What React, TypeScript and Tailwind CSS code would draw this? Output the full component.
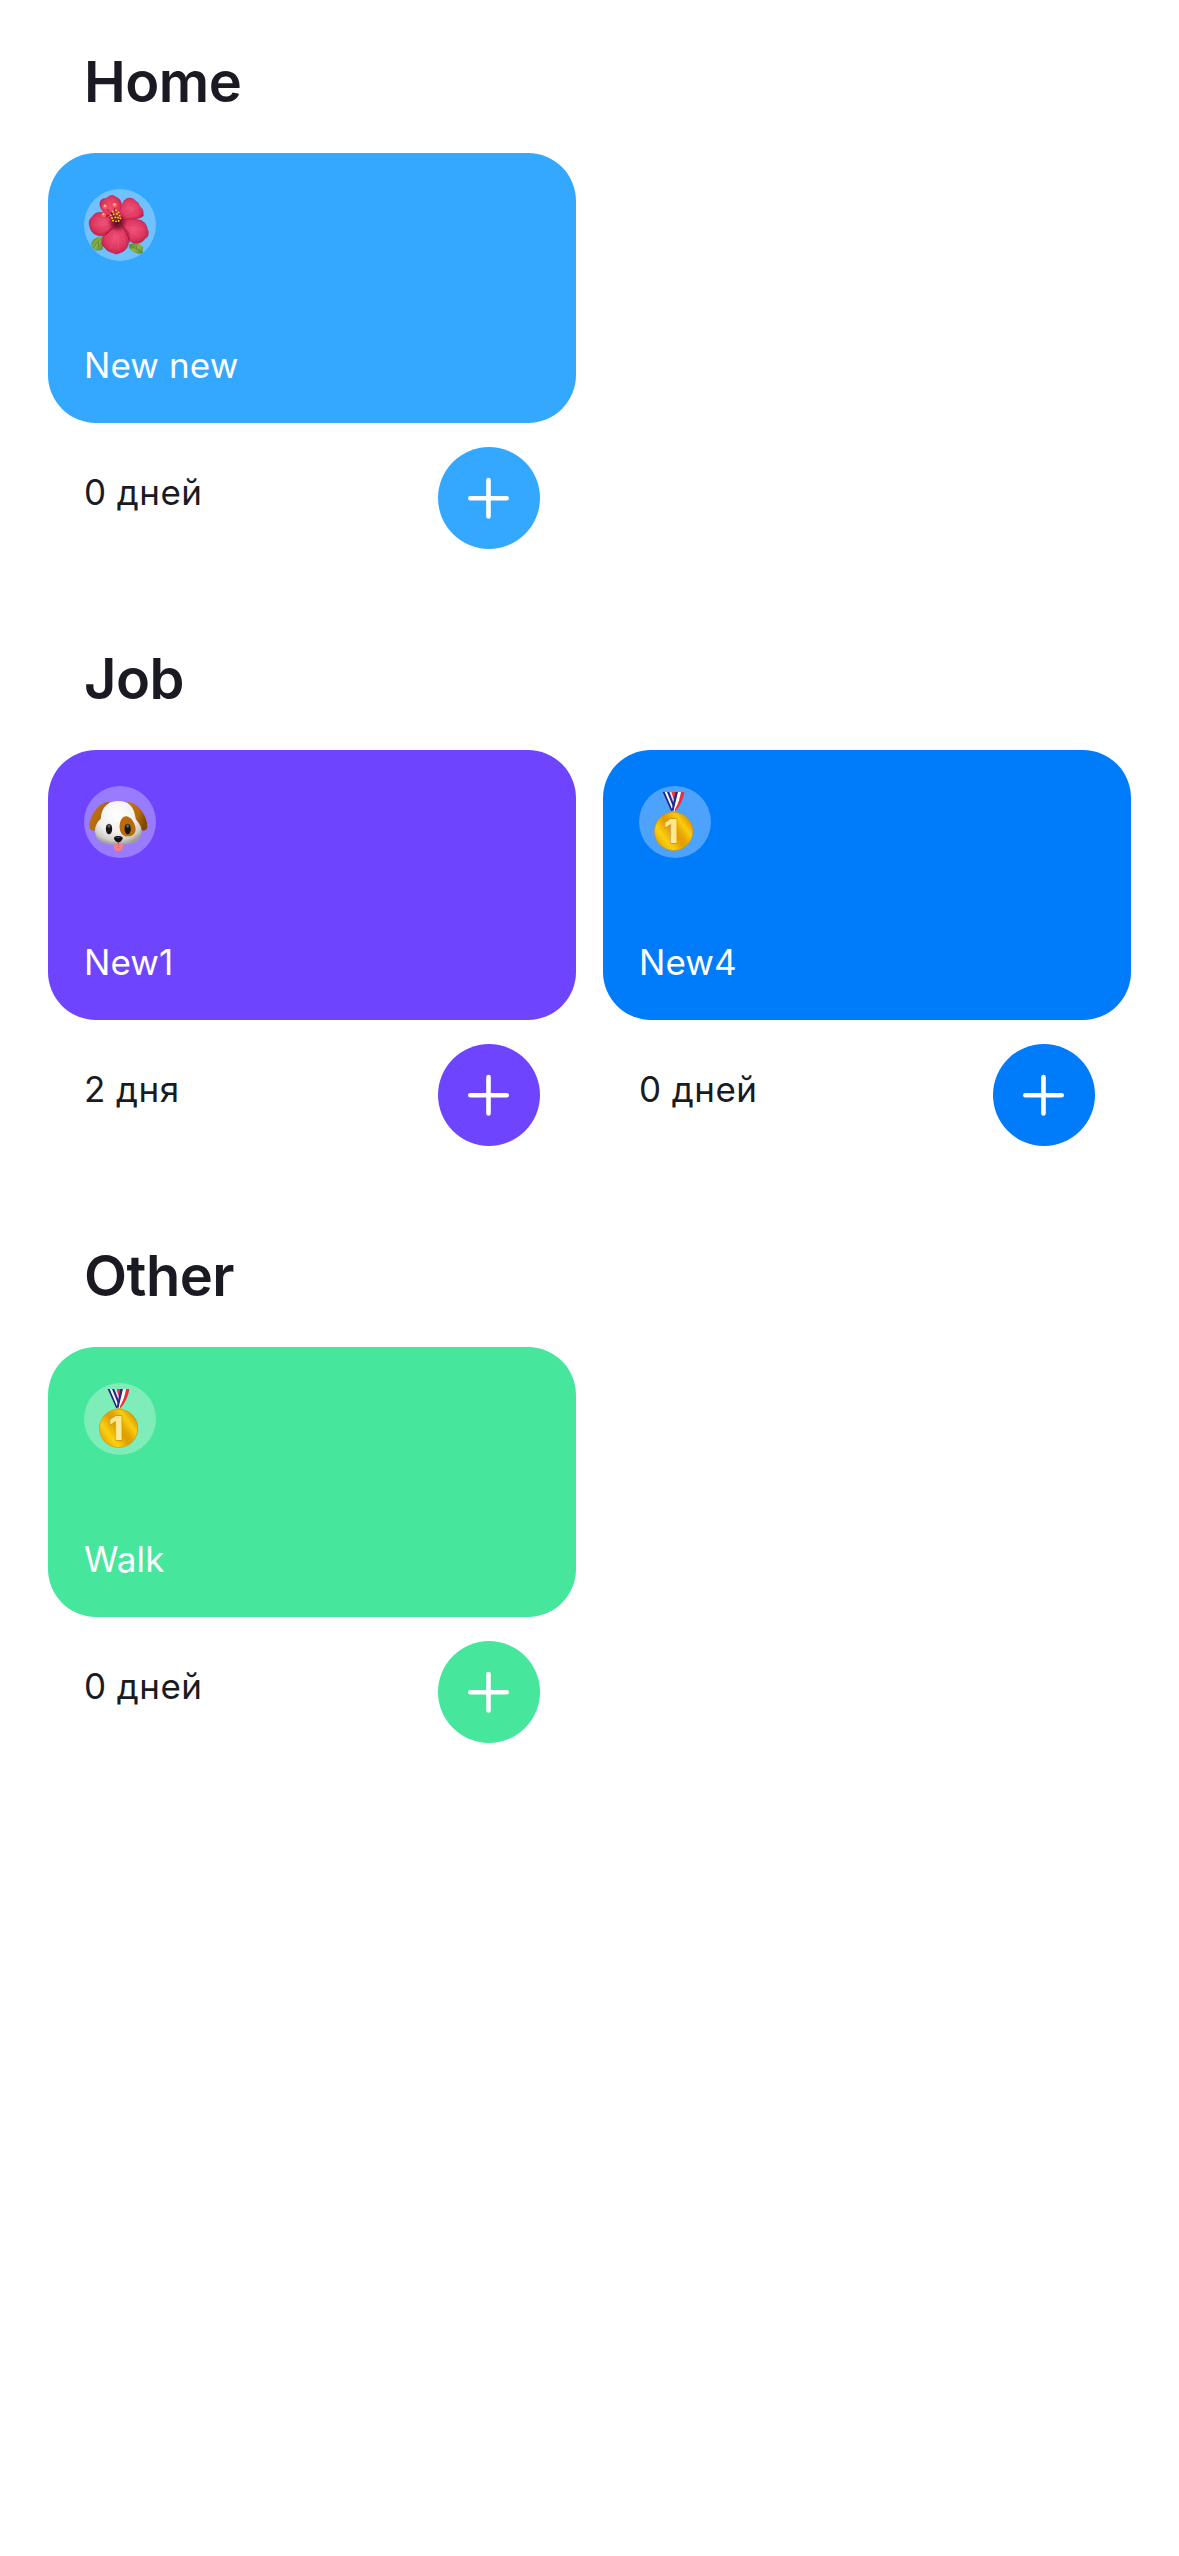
import type { ReactNode } from "react";

function Badge({ children }: { children: ReactNode }) {
  return (
    <div className="size-[72px] overflow-hidden rounded-full bg-white/30">
      <svg viewBox="12 12 216 216" className="block size-full">
        {children}
      </svg>
    </div>
  );
}

function Hibiscus() {
  return (
    <Badge>
      <defs>
        <radialGradient id="petal" cx="0.5" cy="0.45" r="0.6">
          <stop offset="0" stopColor="#ee5277" />
          <stop offset="0.6" stopColor="#e03760" />
          <stop offset="1" stopColor="#b81f47" />
        </radialGradient>
        <radialGradient id="throat">
          <stop offset="0" stopColor="#4d0716" />
          <stop offset="0.5" stopColor="#7d0f2b" stopOpacity="0.75" />
          <stop offset="1" stopColor="#a81b3f" stopOpacity="0" />
        </radialGradient>
        <linearGradient id="leaf" x1="0" y1="0" x2="1" y2="1">
          <stop offset="0" stopColor="#4f812f" />
          <stop offset="0.5" stopColor="#8db34c" />
          <stop offset="1" stopColor="#578732" />
        </linearGradient>
      </defs>
      <path d="M70 154C50 154 35 163 33 178L35 190C46 199 60 198 68 193Z" fill="url(#leaf)" />
      <path d="M148 178C168 172 184 175 189 187L188 206C174 208 156 202 147 188Z" fill="url(#leaf)" />
      <path d="M67 158Q48 173 38 190M55 170L56 186M152 183Q170 190 184 202M168 181L171 194" fill="none" stroke="#4b792d" strokeWidth="2" />
      <g fill="url(#petal)" stroke="#a81c42" strokeWidth="1.2">
        <path d="M113 110C89 94 65 84 60 62C57 42 72 40 80 40C87 30 101 28 109 37C124 43 127 57 123 77Z" />
        <path d="M111 109C115 88 121 67 130 51C140 34 158 38 166 47C179 54 176 63 187 72C192 82 188 89 191 92C180 103 145 105 111 109Z" />
        <path d="M111 114C94 92 72 76 49 84C38 89 40 95 31 101C24 111 29 120 30 129C37 149 55 156 75 151C90 147 100 133 111 114Z" />
        <path d="M116 111C137 99 161 99 178 105C190 106 201 120 202 132C208 143 205 157 196 160C188 174 174 177 160 174C136 165 137 132 116 111Z" />
        <path d="M116 119C89 125 68 143 66 166C62 175 69 186 76 190C81 200 94 201 101 205C111 210 119 203 127 201C139 194 147 183 146 166C151 151 146 136 132 129Z" />
      </g>
      <path d="M67 88Q92 98 111 114L74 152M117 109Q145 145 149 173M75 148Q93 132 118 123" fill="none" stroke="#861331" strokeWidth="3" opacity="0.7" />
      <circle cx="112" cy="112" r="30" fill="url(#throat)" />
      <g fill="none" stroke="#ffb3bd" strokeWidth="1" opacity="0.3">
        <path d="M130 92L166 70M128 84L150 52M136 98L180 86M88 118L40 120M80 106L46 98M87 130L54 144M106 148L92 193M116 148L115 196M127 145L136 185M145 125L190 132M148 134L182 161M104 74L98 42M86 78L70 62" />
      </g>
      <path d="M76 68L98 91M104 63L104 82M73 91L92 91" stroke="#a91439" strokeWidth="3" />
      <path d="M94 82L110 112" stroke="#701326" strokeWidth="5" />
      <g fill="#ff5b60" stroke="#c9223d" strokeWidth="1">
        <circle cx="76" cy="65" r="9" />
        <circle cx="104" cy="60" r="9" />
        <circle cx="71" cy="90" r="8" />
      </g>
      <g fill="#ffc0b0">
        <circle cx="75" cy="63" r="3.5" />
        <circle cx="103" cy="58" r="3.5" />
        <circle cx="70" cy="88" r="3" />
      </g>
      <path d="M92 91H119M96 99L120 95M98 80L114 108M108 76L104 108M101 87L121 102M99 107L115 86M116 108L107 93" stroke="#8c4710" strokeWidth="2" />
      <g fill="#ffd42a">
        {[[98, 80], [108, 76], [116, 82], [92, 91], [101, 88], [111, 87], [119, 92], [96, 99], [106, 97], [114, 98], [121, 100], [99, 107], [108, 109], [116, 108]].map(([x, y]) => (
          <circle key={`${x}-${y}`} cx={x} cy={y} r="2.8" />
        ))}
      </g>
    </Badge>
  );
}

function Dog() {
  return (
    <Badge>
      <defs>
        <radialGradient id="fur" cx="0.46" cy="0.3" r="0.7">
          <stop offset="0" stopColor="#fff" />
          <stop offset="0.6" stopColor="#f1f0ef" />
          <stop offset="0.86" stopColor="#cfcccb" />
          <stop offset="1" stopColor="#a29b9c" />
        </radialGradient>
        <linearGradient id="ear" x1="0" y1="0" x2="1" y2="0.5">
          <stop offset="0" stopColor="#c2771a" />
          <stop offset="0.6" stopColor="#b26a0c" />
          <stop offset="1" stopColor="#824700" />
        </linearGradient>
      </defs>
      <path d="M89 60C72 60 57 70 47 83C33 101 27 119 28 134C31 149 44 148 49 141C57 123 69 93 89 60Z" fill="url(#ear)" />
      <path d="M141 60C158 59 174 71 184 85C197 103 203 121 202 136C199 149 185 148 180 140C172 117 160 86 141 60Z" fill="url(#ear)" />
      <path d="M115 57C86 57 65 72 62 111C50 121 43 137 46 153C47 181 76 189 115 189C157 189 184 180 185 151C186 137 178 123 167 112C164 73 144 57 115 57Z" fill="url(#fur)" />
      <path d="M139 103C124 103 118 120 119 139C121 157 132 165 145 163C158 162 166 154 167 143C167 126 154 104 139 103Z" fill="#b96b0b" />
      <ellipse cx="87" cy="141" rx="9.5" ry="16" fill="#171717" />
      <ellipse cx="143" cy="141" rx="9.5" ry="16" fill="#171717" />
      <ellipse cx="87" cy="132" rx="4" ry="5" fill="#68696b" />
      <ellipse cx="143" cy="132" rx="4" ry="5" fill="#68696b" />
      <path d="M84 180Q104 188 115 177Q126 188 148 180" fill="none" stroke="#b1abab" strokeWidth="2.5" />
      <path d="M101 185C107 189 111 187 115 184C119 187 124 189 129 185C131 200 125 208 115 208C105 208 99 200 101 185Z" fill="#f47e8b" />
      <path d="M115 185V198" stroke="#d9596b" strokeWidth="2" />
      <path d="M102 167C104 160 126 160 128 167C129 173 121 181 115 181C109 181 101 173 102 167Z" fill="#111" />
      <path d="M115 179V186" stroke="#4c3d3e" strokeWidth="2" />
      <ellipse cx="115" cy="166" rx="7" ry="2" fill="#555" />
    </Badge>
  );
}

function Medal() {
  return (
    <Badge>
      <defs>
        <linearGradient id="gold" x1="0.1" y1="0.8" x2="0.9" y2="0.2">
          <stop offset="0" stopColor="#eaae00" />
          <stop offset="0.2" stopColor="#fdd010" />
          <stop offset="0.48" stopColor="#e09c00" />
          <stop offset="0.6" stopColor="#e6a400" />
          <stop offset="0.8" stopColor="#fbcc10" />
          <stop offset="1" stopColor="#dc9900" />
        </linearGradient>
        <linearGradient id="digit" x1="0" y1="0" x2="1" y2="1">
          <stop offset="0" stopColor="#fbe07a" />
          <stop offset="1" stopColor="#ffefa6" />
        </linearGradient>
      </defs>
      <path d="M101 30H128L118 72Z" fill="#ef2535" />
      <path d="M101 30H110L121 66L117 82Z" fill="#dedfe9" />
      <path d="M110 30H119L120 62Z" fill="#ff3638" />
      <path d="M83 30H90L114 89L108 86Z" fill="#20267f" />
      <path d="M89 30H101L119 77L115 89Z" fill="#f8f7ff" />
      <path d="M96 30H103L119 72L117 82Z" fill="#25268e" />
      <path d="M121 30H130L117 88L110 85Z" fill="#27298e" />
      <path d="M129 30H139L124 83L115 89Z" fill="#fff" />
      <path d="M138 30H148C145 51 135 73 121 88L119 83C131 64 136 47 138 30Z" fill="#f52a35" />
      <path d="M105 91Q116 83 127 91L124 97H108Z" fill="#d8ae59" />
      <circle cx="116" cy="148" r="57.5" fill="url(#gold)" stroke="#cf9410" strokeWidth="2" />
      <text x="108" y="184" textAnchor="middle" className="font-['Inter'] text-[100px] font-extrabold" fill="url(#digit)" stroke="#c38408" strokeWidth="3" paintOrder="stroke">
        1
      </text>
    </Badge>
  );
}

type Habit = { name: string; days: string; color: string; icon: ReactNode };

function HabitCard({ name, days, color, icon }: Habit) {
  return (
    <article>
      <div className={`flex h-[270px] flex-col items-start justify-between rounded-[48px] px-9 pt-9 pb-[37px] ${color}`}>
        {icon}
        <h3 className="text-[35px] leading-[42px] font-normal tracking-[0.1px] text-white">{name}</h3>
      </div>
      <div className="flex items-start justify-between px-9 pt-6">
        <p className="pt-[22px] text-[35px] leading-[46px] tracking-[0.45px] text-[#1a1b22]">{days}</p>
        <button type="button" aria-label="Add day" className={`grid size-[102px] place-items-center rounded-full ${color}`}>
          <svg viewBox="0 0 42 42" className="size-[42px]" fill="none" stroke="white" strokeWidth="4.6" strokeLinecap="round">
            <path d="M2.3 21.3H38.7M20.5 3.1V39.5" />
          </svg>
        </button>
      </div>
    </article>
  );
}

const sections: { title: string; habits: Habit[] }[] = [
  { title: "Home", habits: [{ name: "New new", days: "0 дней", color: "bg-[#34a7ff]", icon: <Hibiscus /> }] },
  {
    title: "Job",
    habits: [
      { name: "New1", days: "2 дня", color: "bg-[#6e44fe]", icon: <Dog /> },
      { name: "New4", days: "0 дней", color: "bg-[#007bfa]", icon: <Medal /> },
    ],
  },
  { title: "Other", habits: [{ name: "Walk", days: "0 дней", color: "bg-[#47e69d]", icon: <Medal /> }] },
];

export default function App() {
  return (
    <main className="flex min-h-screen flex-col bg-white px-12 font-['Inter',sans-serif]">
      {sections.map(({ title, habits }) => (
        <section key={title} className="h-[597px]">
          <h2 className="h-[153px] px-9 pt-[48px] text-[56px] leading-[68px] font-semibold tracking-[-0.5px] text-[#1a1b22]">{title}</h2>
          <div className="grid grid-cols-2 gap-[27px]">
            {habits.map((habit) => (
              <HabitCard key={habit.name} {...habit} />
            ))}
          </div>
        </section>
      ))}
    </main>
  );
}
